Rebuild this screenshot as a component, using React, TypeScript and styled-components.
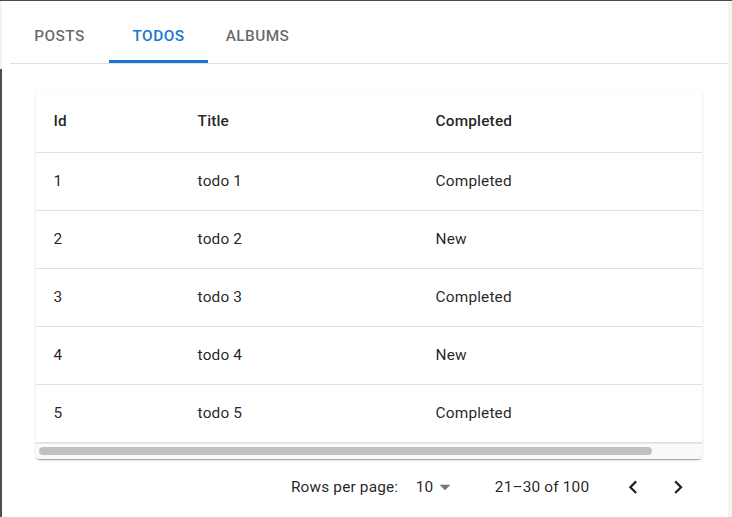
import React, { useState } from "react";
import styled, { createGlobalStyle } from "styled-components";

const GlobalStyle = createGlobalStyle`
  html, body { margin: 0; padding: 0; background: #ffffff; }
  body { font-family: Roboto, "Liberation Sans", Arial, sans-serif; color: rgba(0,0,0,0.87); }
  * { box-sizing: border-box; }
`;

const Frame = styled.div`
  display: flex;
  width: 732px;
  height: 517px;
  border-top: 1px solid #4a4a4a;
  overflow: hidden;
`;

const LeftEdge = styled.div`
  width: 2px;
  display: flex;
  flex-direction: column;
  flex-shrink: 0;
`;

const EdgePart = styled.div<{ $dark?: boolean }>`
  flex: ${(p) => (p.$dark ? "1" : "0 0 68px")};
  background: ${(p) => (p.$dark ? "#4f4f4f" : "#eef5f5")};
`;

const RightEdge = styled.div`
  width: 4px;
  flex-shrink: 0;
  background: #f5f5f5;
`;

const Main = styled.div`
  flex: 1;
  min-width: 0;
  padding: 9px 0 0 8px;
  display: flex;
  flex-direction: column;
`;

const TabBar = styled.div`
  display: flex;
  height: 54px;
  border-bottom: 1px solid #e0e0e0;
`;

const Tab = styled.button<{ $active?: boolean }>`
  position: relative;
  min-width: 99px;
  padding: 13px 17.6px;
  border: none;
  background: transparent;
  font-family: Roboto, "Liberation Sans", Arial, sans-serif;
  font-size: 15.4px;
  font-weight: 500;
  letter-spacing: 0.02857em;
  text-transform: uppercase;
  line-height: 1.25;
  color: ${(p) => (p.$active ? "#1976d2" : "rgba(0,0,0,0.6)")};
  cursor: pointer;
  &::after {
    content: "";
    display: ${(p) => (p.$active ? "block" : "none")};
    position: absolute;
    left: 0;
    right: 0;
    bottom: 0;
    height: 3px;
    background: #1976d2;
  }
`;

const Panel = styled.div`
  padding: 26px 26px 0 26px;
  display: flex;
  flex-direction: column;
  min-width: 0;
`;

const Paper = styled.div`
  background: #fff;
  border-radius: 4px;
  box-shadow: 0px 2px 1px -1px rgba(0,0,0,0.2), 0px 1px 1px 0px rgba(0,0,0,0.14), 0px 1px 3px 0px rgba(0,0,0,0.12);
  overflow: hidden;
  min-width: 0;
`;

const Scroller = styled.div`
  overflow: hidden;
`;

const ScrollTrack = styled.div`
  height: 16px;
  background: #fafafa;
  border-top: 1px solid #e9e9e9;
  padding: 3px 3px 0 3px;
`;

const ScrollThumb = styled.div`
  height: 8px;
  border-radius: 4px;
  background: #c1c1c1;
`;

const Table = styled.table`
  width: 726px;
  table-layout: fixed;
  border-collapse: collapse;
`;

const HeadCell = styled.th<{ $w: number }>`
  width: ${(p) => p.$w}px;
  text-align: left;
  padding: 18px 17.6px;
  font-size: 15.4px;
  font-weight: 500;
  line-height: 26px;
  letter-spacing: 0.01071em;
  color: rgba(0,0,0,0.87);
  border-bottom: 1px solid #e0e0e0;
`;

const Cell = styled.td`
  padding: 17px 17.6px 18px;
  font-size: 15.4px;
  font-weight: 400;
  line-height: 22px;
  letter-spacing: 0.01071em;
  color: rgba(0,0,0,0.87);
  border-bottom: 1px solid #e0e0e0;
  white-space: nowrap;
`;

const Pagination = styled.div`
  display: flex;
  justify-content: flex-end;
  align-items: center;
  height: 57px;
  padding-right: 2px;
  font-size: 15.4px;
  letter-spacing: 0.01071em;
  color: rgba(0,0,0,0.87);
`;

const PageLabel = styled.span`
  line-height: 1.43;
`;

const SelectBox = styled.div`
  position: relative;
  margin: 0 35px 0 8.8px;
  padding: 4px 26.4px 4px 8.8px;
  line-height: 1.43;
`;

const DropIcon = styled.svg`
  position: absolute;
  right: 2px;
  top: 50%;
  margin-top: -13px;
  width: 26px;
  height: 26px;
  fill: rgba(0,0,0,0.54);
`;

const Actions = styled.div`
  display: flex;
  margin-left: 22px;
`;

const IconButton = styled.button`
  width: 44.4px;
  height: 44.4px;
  padding: 8.8px;
  border: none;
  border-radius: 50%;
  background: transparent;
  display: flex;
  align-items: center;
  justify-content: center;
  color: rgba(0,0,0,0.87);
  cursor: pointer;
  svg { width: 26.4px; height: 26.4px; fill: currentColor; }
`;

const rows = [
  { id: 1, title: "todo 1", completed: true },
  { id: 2, title: "todo 2", completed: false },
  { id: 3, title: "todo 3", completed: true },
  { id: 4, title: "todo 4", completed: false },
  { id: 5, title: "todo 5", completed: true },
];

const TABLE_WIDTH = 726;
const VIEW_WIDTH = 667;

export default function App() {
  const [tab, setTab] = useState(1);
  const tabs = ["Posts", "Todos", "Albums"];
  const thumbWidth = Math.round((VIEW_WIDTH * VIEW_WIDTH) / TABLE_WIDTH);
  return (
    <>
      <GlobalStyle />
      <Frame>
        <LeftEdge>
          <EdgePart />
          <EdgePart $dark />
        </LeftEdge>
        <Main>
          <TabBar>
            {tabs.map((t, i) => (
              <Tab key={t} $active={i === tab} onClick={() => setTab(i)}>
                {t}
              </Tab>
            ))}
          </TabBar>
          <Panel>
            <Paper>
              <Scroller>
                <Table>
                  <thead>
                    <tr>
                      <HeadCell $w={144}>Id</HeadCell>
                      <HeadCell $w={238}>Title</HeadCell>
                      <HeadCell $w={344}>Completed</HeadCell>
                    </tr>
                  </thead>
                  <tbody>
                    {rows.map((r) => (
                      <tr key={r.id}>
                        <Cell>{r.id}</Cell>
                        <Cell>{r.title}</Cell>
                        <Cell>{r.completed ? "Completed" : "New"}</Cell>
                      </tr>
                    ))}
                  </tbody>
                </Table>
              </Scroller>
              <ScrollTrack>
                <ScrollThumb style={{ width: thumbWidth }} />
              </ScrollTrack>
            </Paper>
            <Pagination>
              <PageLabel>Rows per page:</PageLabel>
              <SelectBox>
                10
                <DropIcon viewBox="0 0 24 24">
                  <path d="M7 10l5 5 5-5z" />
                </DropIcon>
              </SelectBox>
              <PageLabel>21–30 of 100</PageLabel>
              <Actions>
                <IconButton aria-label="previous page">
                  <svg viewBox="0 0 24 24">
                    <path d="M15.41 16.59L10.83 12l4.58-4.59L14 6l-6 6 6 6 1.41-1.41z" />
                  </svg>
                </IconButton>
                <IconButton aria-label="next page">
                  <svg viewBox="0 0 24 24">
                    <path d="M8.59 16.59L13.17 12 8.59 7.41 10 6l6 6-6 6-1.41-1.41z" />
                  </svg>
                </IconButton>
              </Actions>
            </Pagination>
          </Panel>
        </Main>
        <RightEdge />
      </Frame>
    </>
  );
}
